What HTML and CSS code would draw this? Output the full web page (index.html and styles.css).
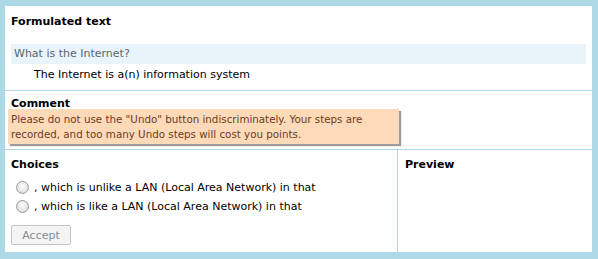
FILE: index.html
```html
<!DOCTYPE html>
<html>
<head>
<meta charset="utf-8">
<link rel="stylesheet" href="styles.css">
</head>
<body>
<div class="frame">
  <div class="section formulated">
    <div class="heading">Formulated text</div>
    <div class="question">What is the Internet?</div>
    <div class="answer">The Internet is a(n) information system</div>
  </div>
  <div class="section comment">
    <div class="heading">Comment</div>
    <div class="note">Please do not use the "Undo" button indiscriminately. Your steps are recorded, and too many Undo steps will cost you points.</div>
  </div>
  <div class="bottom">
    <div class="choices">
      <div class="heading">Choices</div>
      <div class="choice-list">
        <label class="choice"><span class="radio"></span>, which is unlike a LAN (Local Area Network) in that</label>
        <label class="choice"><span class="radio"></span>, which is like a LAN (Local Area Network) in that</label>
      </div>
      <button class="accept" disabled>Accept</button>
    </div>
    <div class="preview">
      <div class="heading">Preview</div>
    </div>
  </div>
</div>
</body>
</html>
```
FILE: styles.css
```css
html, body {
  margin: 0;
  padding: 0;
  height: 100%;
}
body {
  background: #add8e6;
  font-family: "DejaVu Sans", Verdana, sans-serif;
  font-size: 11px;
  color: #000;
  padding: 6px 6px 7px 5px;
  box-sizing: border-box;
}
.frame {
  background: #fff;
  height: 100%;
  display: flex;
  flex-direction: column;
}
.section {
  border-bottom: 1px solid #add8e6;
  box-sizing: border-box;
}
.heading {
  font-weight: bold;
  font-size: 11px;
  line-height: 16px;
}
.formulated {
  padding: 8px 6px 0 6px;
  height: 85px;
}
.question {
  margin-top: 14px;
  background: #e8f4fa;
  color: #5d6470;
  line-height: 20px;
  padding-left: 3px;
}
.answer {
  padding-left: 23px;
  line-height: 21px;
}
.comment {
  padding: 7px 0 0 3px;
  height: 59px;
}
.comment .heading {
  padding-left: 3px;
  line-height: 11px;
}
.note {
  width: 386px;
  background: #ffdab9;
  color: #6b3a1f;
  font-size: 10.3px;
  line-height: 15px;
  padding: 3px 2px 2px 3px;
  box-shadow: 2px 2px 1px #9a9a9a;
}
.bottom {
  flex: 1;
  display: flex;
}
.choices {
  width: 393px;
  box-sizing: border-box;
  padding: 7px 0 0 6px;
  border-right: 1px solid #add8e6;
}
.preview {
  flex: 1;
  padding: 7px 0 0 7px;
}
.choice-list {
  margin-top: 5px;
}
.choice {
  display: flex;
  align-items: center;
  height: 19px;
  padding-left: 5px;
}
.radio {
  width: 11px;
  height: 11px;
  border-radius: 50%;
  border: 1px solid #9a9a9a;
  background: radial-gradient(circle at 50% 40%, #ffffff 0%, #e4e4e4 60%, #cfcfcf 100%);
  margin-right: 5px;
}
.accept {
  display: block;
  margin-top: 9px;
  font-family: "DejaVu Sans", Verdana, sans-serif;
  font-size: 11px;
  color: #8a8a8a;
  background: #f4f4f4;
  border: 1px solid #c4c4c4;
  border-radius: 2px;
  width: 60px;
  height: 20px;
  padding: 0;
}
```
